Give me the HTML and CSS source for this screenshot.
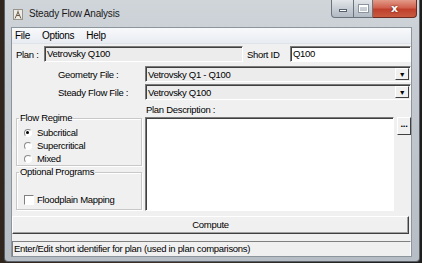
FILE: index.html
```html
<!DOCTYPE html>
<html lang="en">
<head>
    <meta charset="UTF-8">
    <title>Steady Flow Analysis</title>
    <link rel="stylesheet" href="styles.css">
</head>
<body>
    <div class="window">
        <!-- Title bar -->
        <div class="titlebar">
            <svg class="app-icon" width="10" height="11" viewBox="0 0 10 11">
                <rect x="0.5" y="0.5" width="9" height="10" fill="#eeebe5" stroke="#9a958a"/>
                <path d="M2 9.5 L5 3 L8 9.5 M3.5 6.5 L6.5 6.5 M5 3 L5 1.5" stroke="#6a5a48" stroke-width="1" fill="none"/>
            </svg>
            <span class="title">Steady Flow Analysis</span>
            <div class="caption-btns">
                <span class="cb cb-min"><i></i></span>
                <span class="cb cb-max"><i></i></span>
                <span class="cb cb-close">x</span>
            </div>
        </div>

        <div class="client">
            <div class="menubar">
                <span>File</span>
                <span>Options</span>
                <span>Help</span>
            </div>

            <div class="plan-row">
                <span class="lbl plan-lbl">Plan :</span>
                <div class="field field-plan">Vetrovsky Q100</div>
                <span class="lbl short-lbl">Short ID</span>
                <div class="field field-short">Q100</div>
            </div>

            <div class="file-row">
                <span class="lbl file-lbl">Geometry File :</span>
                <div class="combo">
                    <span>Vetrovsky Q1 - Q100</span>
                    <span class="combo-btn">&#9660;</span>
                </div>
            </div>
            <div class="file-row file-row-2">
                <span class="lbl file-lbl">Steady Flow File :</span>
                <div class="combo">
                    <span>Vetrovsky Q100</span>
                    <span class="combo-btn">&#9660;</span>
                </div>
            </div>

            <div class="main">
                <div class="left-col">
                    <fieldset class="group group-regime">
                        <legend>Flow Regime</legend>
                        <label class="opt"><span class="radio checked"></span>Subcritical</label>
                        <label class="opt"><span class="radio"></span>Supercritical</label>
                        <label class="opt"><span class="radio"></span>Mixed</label>
                    </fieldset>
                    <fieldset class="group group-optional">
                        <legend>Optional Programs</legend>
                        <label class="opt check-opt"><span class="check"></span>Floodplain Mapping</label>
                    </fieldset>
                </div>
                <div class="right-col">
                    <div class="desc-lbl">Plan Description :</div>
                    <div class="desc-row">
                        <div class="desc-box"></div>
                        <div class="dots-btn">...</div>
                    </div>
                </div>
            </div>

            <div class="compute">Compute</div>

            <div class="statusbar">Enter/Edit short identifier for plan (used in plan comparisons)</div>
        </div>
    </div>
</body>
</html>
```

FILE: styles.css
```css
/* Resetting some defaults */
* {
    margin: 0;
    padding: 0;
    box-sizing: border-box;
}

body {
    width: 422px;
    height: 263px;
    overflow: hidden;
    background: linear-gradient(90deg, #30261e 0%, #3d3229 40%, #2c2a27 70%, #1e1e1c 100%);
    font-family: 'Liberation Sans', Arial, sans-serif;
    font-size: 9.5px;
    letter-spacing: -0.3px;
    color: #000;
}

/* Window frame */
.window {
    width: 416px;
    height: 262px;
    margin-left: 4px;
    padding: 0 7px 4px 6px;
    background: linear-gradient(180deg, #d0d5da 0%, #c4cad0 30%, #b6bdc4 100%);
    border: 1px solid #5a6068;
    border-top: none;
    border-radius: 0 0 4px 4px;
    display: flex;
    flex-direction: column;
}

.titlebar {
    height: 27px;
    display: flex;
    align-items: flex-start;
    position: relative;
}

.app-icon {
    margin: 9px 0 0 2px;
}

.title {
    margin: 8px 0 0 6px;
    font-size: 10px;
    letter-spacing: -0.2px;
    color: #1a1a1a;
}

.caption-btns {
    position: absolute;
    right: -5px;
    top: 0;
    display: flex;
}

.cb {
    height: 18px;
    display: flex;
    align-items: center;
    justify-content: center;
    border: 1px solid #6c737c;
    border-top: none;
    background: linear-gradient(180deg, #e2e6ea 0%, #c8ced5 50%, #b2bac3 100%);
}

.cb-min {
    width: 23px;
    border-radius: 0 0 0 4px;
}

.cb-min i {
    display: block;
    width: 8px;
    height: 3px;
    margin-top: 4px;
    background: #fff;
    border: 1px solid #55606c;
}

.cb-max {
    width: 19px;
    border-left: none;
}

.cb-max i {
    display: block;
    width: 9px;
    height: 7px;
    border: 1px solid #fff;
    border-top-width: 2px;
    outline: 1px solid #8a939e;
}

.cb-close {
    width: 44px;
    border-left: none;
    border-radius: 0 0 4px 0;
    border-color: #6e2a20;
    background: linear-gradient(180deg, #e29a88 0%, #d0614e 45%, #c0402c 55%, #c85a40 100%);
    color: #fff;
    font-family: 'DejaVu Sans', sans-serif;
    font-weight: bold;
    font-size: 11px;
    letter-spacing: 0;
    text-shadow: 0 0 2px #5a1a10;
}

/* Client area */
.client {
    flex: 1;
    background: #f0f0f0;
    border: 1px solid #8c949c;
    display: flex;
    flex-direction: column;
    overflow: hidden;
}

.menubar {
    height: 16px;
    flex-shrink: 0;
    display: flex;
    align-items: center;
    gap: 12px;
    padding-left: 3px;
    font-size: 10px;
    background: linear-gradient(180deg, #f8f9fb 0%, #e8ecf2 100%);
    border-bottom: 1px solid #dfe3ea;
}

.lbl {
    white-space: nowrap;
}

.plan-row {
    height: 16px;
    flex-shrink: 0;
    margin-top: 2px;
    display: flex;
    align-items: center;
    padding-left: 4px;
}

.plan-lbl {
    width: 28px;
}

.field {
    height: 16px;
    line-height: 13px;
    padding-left: 2px;
    border: 1px solid;
    border-color: #7a7a7a #ffffff #ffffff #7a7a7a;
    box-shadow: inset 1px 1px 0 #404040;
}

.field-plan {
    width: 199px;
    background: #ececec;
}

.short-lbl {
    margin-left: 4px;
    width: 43px;
}

.field-short {
    flex: 1;
    background: #fff;
}

.file-row {
    height: 16px;
    flex-shrink: 0;
    margin-top: 4px;
    display: flex;
    align-items: center;
    padding-left: 46px;
}

.file-row-2 {
    margin-top: 2px;
}

.file-lbl {
    width: 87px;
}

.combo {
    flex: 1;
    height: 16px;
    display: flex;
    align-items: center;
    justify-content: space-between;
    padding-left: 2px;
    background: #ececec;
    border: 1px solid;
    border-color: #7a7a7a #ffffff #ffffff #7a7a7a;
    box-shadow: inset 1px 1px 0 #404040;
}

.combo-btn {
    width: 14px;
    height: 12px;
    margin-right: 1px;
    font-size: 7px;
    line-height: 12px;
    text-align: center;
    color: #000;
    background: #f0f0f0;
    border: 1px solid;
    border-color: #ffffff #404040 #404040 #ffffff;
}

/* Middle area */
.main {
    height: 111px;
    flex-shrink: 0;
    display: flex;
}

.left-col {
    width: 131px;
    padding: 12px 0 0 4px;
    display: flex;
    flex-direction: column;
}

.group {
    border: 1px solid #c8c8c8;
    box-shadow: 1px 1px 0 #fff, inset 1px 1px 0 #fff;
    padding: 0 0 0 7px;
}

.group legend {
    padding: 0 1px;
    margin-left: -5px;
    line-height: 12px;
}

.group-regime {
    height: 54px;
    padding-top: 2px;
}

.group-optional {
    height: 44px;
}

.opt {
    display: flex;
    align-items: center;
    height: 13px;
}

.radio {
    width: 8px;
    height: 8px;
    margin-right: 5px;
    border-radius: 50%;
    border: 1px solid #8a8a8a;
    border-right-color: #fff;
    border-bottom-color: #fff;
    background: #fff;
    position: relative;
}

.radio.checked::after {
    content: "";
    position: absolute;
    left: 1px;
    top: 1px;
    width: 3px;
    height: 3px;
    border-radius: 50%;
    background: #000;
}

.check-opt {
    margin-top: 15px;
}

.check {
    width: 10px;
    height: 10px;
    margin-right: 3px;
    background: #fff;
    border: 1px solid #808080;
    border-right-color: #fff;
    border-bottom-color: #fff;
}

.right-col {
    flex: 1;
    padding-left: 3px;
    display: flex;
    flex-direction: column;
}

.desc-lbl {
    height: 17px;
    padding: 3px 0 0 1px;
    line-height: 13px;
}

.desc-row {
    flex: 1;
    display: flex;
    align-items: flex-start;
}

.desc-box {
    width: 249px;
    height: 94px;
    background: #fff;
    border: 1px solid;
    border-color: #7a7a7a #ffffff #ffffff #7a7a7a;
    box-shadow: inset 1px 1px 0 #404040;
}

.dots-btn {
    width: 14px;
    height: 18px;
    margin-left: 3px;
    font-weight: bold;
    line-height: 12px;
    text-align: center;
    background: #f0f0f0;
    border: 1px solid;
    border-color: #ffffff #404040 #404040 #ffffff;
}

.compute {
    height: 18px;
    flex-shrink: 0;
    margin: 5px 2px 0 0;
    line-height: 16px;
    text-align: center;
    background: #f0f0f0;
    border: 1px solid;
    border-color: #ffffff #404040 #404040 #ffffff;
    box-shadow: inset -1px -1px 0 #a0a0a0;
}

.statusbar {
    height: 16px;
    flex-shrink: 0;
    margin-top: 7px;
    padding-left: 1px;
    line-height: 14px;
    white-space: nowrap;
    border: 1px solid;
    border-color: #808080 #ffffff #ffffff #808080;
}
```
